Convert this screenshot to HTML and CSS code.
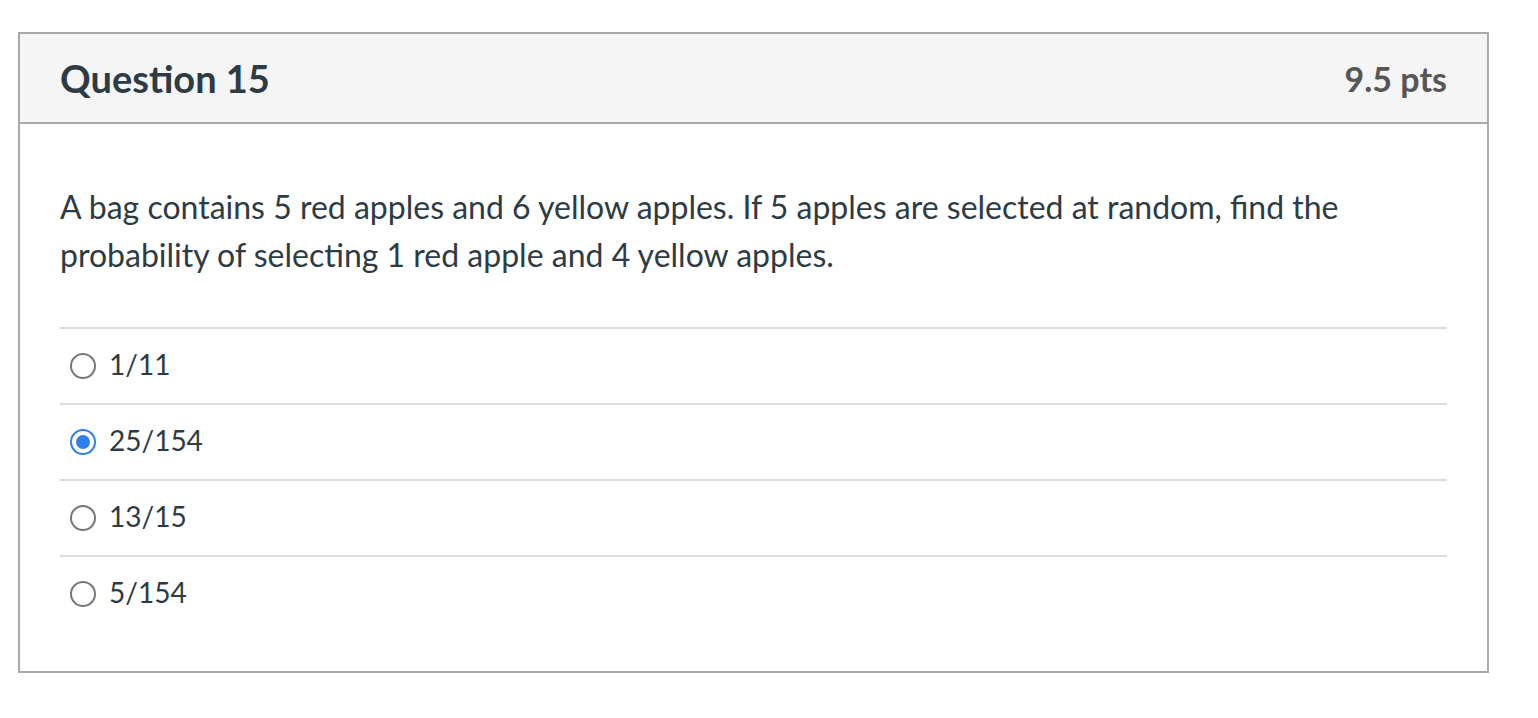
FILE: index.html
```html
<!DOCTYPE html>
<html>
<head>
<meta charset="utf-8">
<link rel="stylesheet" href="styles.css">
</head>
<body>
<div class="card">
  <div class="header">
    <div class="title">Question 15</div>
    <div class="pts">9.5 pts</div>
  </div>
  <div class="body">
    <p class="text">A bag contains 5 red apples and 6 yellow apples. If 5 apples are selected at random, find the probability of selecting 1 red apple and 4 yellow apples.</p>
    <div class="answers">
      <div class="answer"><span class="radio"></span><span class="label">1/11</span></div>
      <div class="answer"><span class="radio checked"></span><span class="label">25/154</span></div>
      <div class="answer"><span class="radio"></span><span class="label">13/15</span></div>
      <div class="answer"><span class="radio"></span><span class="label">5/154</span></div>
    </div>
  </div>
</div>
</body>
</html>
```
FILE: styles.css
```css
html, body {
  margin: 0;
  padding: 0;
  background: #fff;
}
body {
  padding: 32px 0 0 18px;
  font-family: Lato, "Liberation Sans", sans-serif;
  color: #2d3b45;
}
.card {
  width: 1467px;
  border: 2px solid #a9a9a9;
}
.header {
  height: 88px;
  background: #f5f5f5;
  border-bottom: 2px solid #a9a9a9;
  display: flex;
  align-items: center;
  justify-content: space-between;
  padding: 0 40px 0 40px;
}
.title {
  font-size: 38px;
  font-weight: 700;
  color: #2d3b45;
}
.pts {
  font-size: 34px;
  font-weight: 700;
  color: #565656;
}
.body {
  padding: 59px 40px 40px 40px;
}
.text {
  margin: 0 0 48px 0;
  font-size: 32px;
  line-height: 48px;
}
.answers {
  display: flex;
  flex-direction: column;
}
.answer {
  border-top: 2px solid #dcdcdc;
  height: 74px;
  display: flex;
  align-items: center;
  padding-left: 10px;
}
.radio {
  width: 22px;
  height: 22px;
  border: 2px solid #777;
  border-radius: 50%;
  box-sizing: content-box;
  margin-right: 13px;
  position: relative;
}
.radio.checked {
  border-color: #2f7ff0;
}
.radio.checked::after {
  content: "";
  position: absolute;
  left: 4px;
  top: 4px;
  width: 14px;
  height: 14px;
  border-radius: 50%;
  background: #2f7ff0;
}
.label {
  font-size: 28px;
  line-height: 1;
  position: relative;
  top: -2px;
}
```
